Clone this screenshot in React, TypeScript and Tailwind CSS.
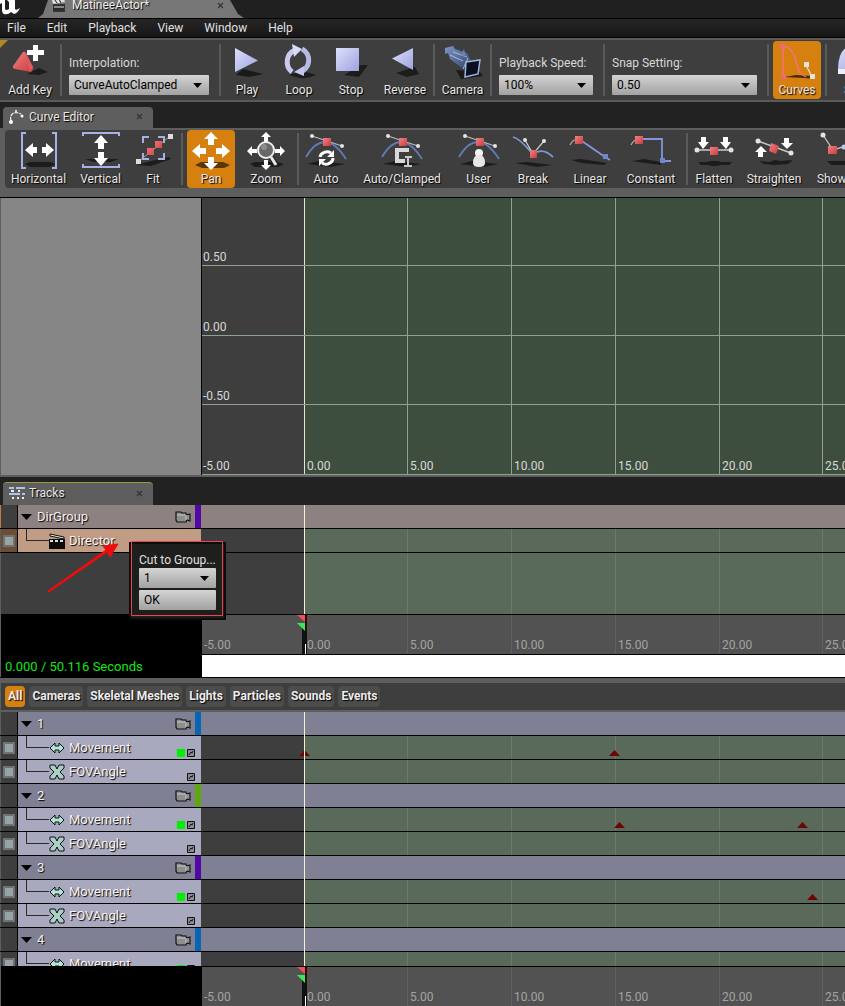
import * as React from "react";

const PX_PER_SECOND = 20.75;
const ZERO_X = 102;
const MARKS = [-5, 0, 5, 10, 15, 20, 25];

const timeToX = (t: number) => Math.floor(ZERO_X + t * PX_PER_SECOND);

/* ---------- toolbar icons ---------- */

function Icon({ children }: { children: React.ReactNode }) {
  return (
    <svg viewBox="0 0 42 40" className="h-10 w-[42px] shrink-0" fill="none" aria-hidden="true">
      <defs>
        <linearGradient id="lilac" x1="0" y1="0" x2="1" y2="1">
          <stop offset="0" stopColor="#dfe0fb" />
          <stop offset="1" stopColor="#9ba3e0" />
        </linearGradient>
        <linearGradient id="red" x1="0" y1="0" x2="1" y2="1">
          <stop offset="0" stopColor="#f58080" />
          <stop offset="1" stopColor="#c63c40" />
        </linearGradient>
        <linearGradient id="steel" x1="0" y1="0" x2="1" y2="1">
          <stop offset="0" stopColor="#7f97c4" />
          <stop offset="1" stopColor="#33486e" />
        </linearGradient>
      </defs>
      {children}
    </svg>
  );
}

const AddKeyIcon = () => (
  <Icon>
    <path d="M18 33l12-6 9 4-9 3z" fill="#1c1c1c" />
    <path d="M14 11q2-1 3 1l7 14q1 2-2 5l-16-3q-3-1-2-3z" fill="url(#red)" />
    <path d="M16 11l8 15-3 5z" fill="#e0585c" />
    <path d="M24 4h5v5h6v5h-6v6h-5v-6h-6V9h6z" fill="#fff" />
  </Icon>
);

const PlayIcon = () => (
  <Icon>
    <path d="M10 34l7-6 20 5-14 3z" fill="#1a1a1a" />
    <path d="M9 7l23 12.500L9 31z" fill="url(#lilac)" />
  </Icon>
);

const LoopIcon = () => (
  <Icon>
    <path d="M11 34q14-6 27 0-8 4-16 3z" fill="#1c1c1c" />
    <path d="M14 31A13 13 0 0 1 17 9" stroke="#c9cbee" strokeWidth="5" />
    <path d="M14 3l10 5-8 8z" fill="#d8daf7" />
    <path d="M24 8A12.500 12.500 0 0 1 22 31" stroke="#b7bbe4" strokeWidth="5" />
    <path d="M26 25v10l-10-4z" fill="#c3c6ee" />
  </Icon>
);

const StopIcon = () => (
  <Icon>
    <path d="M14 34l17-10h7l-9 12z" fill="#1c1c1c" />
    <path d="M6 7h23v23H6z" fill="url(#lilac)" />
  </Icon>
);

const ReverseIcon = () => (
  <Icon>
    <path d="M12 32l19-6 4 7-12 3z" fill="#1c1c1c" />
    <path d="M29 7v22L8 17.500z" fill="url(#lilac)" />
  </Icon>
);

const CameraIcon = () => (
  <Icon>
    <path d="M14 29l24 2 3 4-22 3z" fill="#1a1a1a" />
    <path d="M3 7l8-2 2 3 12 4 4 8-9 7L8 18 6 12l-3 1z" fill="url(#steel)" />
    <path d="M8 14l13 6m-10-9l14 5m-4 12l5-11" stroke="#a7bbe0" strokeWidth="1" />
    <path d="M19 14l3-6 2 8" fill="#6883b5" />
    <path d="M24 21l14-2-2 14-13 3z" fill="#0a1020" stroke="#9db4dd" strokeWidth="1.500" />
  </Icon>
);

const CurvesIcon = () => (
  <Icon>
    <path d="M8 36l12-2 16 1 2 3-10-1z" fill="#4a2a06" />
    <path d="M7 5v30M7 5c14 2 13 22 17 27l6 4" stroke="#f0747c" strokeWidth="1.500" />
    <path d="M30 24l6 12" stroke="#e8e0d0" strokeWidth="1.200" />
    <path d="M4 3h5v5H4zM5 33h5v5H5z" fill="#ee6a70" />
    <path d="M28 21h5v5h-5zM34 33h5v5h-5z" fill="#e6e4de" />
  </Icon>
);

const SlowIcon = () => (
  <Icon>
    <path d="M2 28Q2 4 20 4t20 24z" fill="url(#lilac)" />
    <path d="M2 28h38v5H2z" fill="#eef" />
  </Icon>
);

const HorizontalIcon = () => (
  <Icon>
    <path d="M7 34l5-2h20l6 2-6 3H12z" fill="#1c1c1c" />
    <path d="M8 3H4v35h4M34 3h4v35h-4" stroke="#a7b1e6" strokeWidth="2" />
    <path d="M7 20l8-7v4h4v6h-4v4zM36 20l-8-7v4h-4v6h4v4z" fill="#fff" />
  </Icon>
);

const VerticalIcon = () => (
  <Icon>
    <path d="M5 29h34l-8 3H14z" fill="#1c1c1c" />
    <path d="M3 6V3h36v3M3 34v3h36v-3" stroke="#a7b1e6" strokeWidth="2" />
    <path d="M21 5l7 8h-4v6h-6v-6h-4zM21 36l7-8h-4v-6h-6v6h-4z" fill="#fff" />
  </Icon>
);

const FitIcon = () => (
  <Icon>
    <path d="M5 35l10-3 22-5 2 2-20 7z" fill="#1c1c1c" />
    <path d="M17 7h-6v6M26 7h6v6M17 29h-6v-6M26 29h6v-6" stroke="#a7b1e6" strokeWidth="2" />
    <path d="M7 31l30-24" stroke="#aaa" strokeWidth="1" />
    <path d="M15 18h7v7h-7zM23 11h7v7h-7z" fill="url(#red)" />
    <path d="M4 29h5v5H4zM36 4h5v5h-5z" fill="#ddd" />
  </Icon>
);

const PanIcon = () => (
  <Icon>
    <path d="M5 35l6-3h22l7 3-6 3H12z" fill="#5a3505" />
    <path d="M21 2l7 7h-4v6h-6V9h-4zM21 40l7-7h-4v-6h-6v6h-4z" fill="#fff" />
    <path d="M2 21l8-7v4h6v6h-6v4zM40 21l-8-7v4h-6v6h6v4z" fill="#fff" />
  </Icon>
);

const ZoomIcon = () => (
  <Icon>
    <path d="M5 34l5-2h22l7 2-6 3H10z" fill="#1c1c1c" />
    <path
      d="M21 2l5 5h-3v5h-4V7h-3zM21 40l5-5h-3v-5h-4v5h-3zM2 21l5-5v3h5v4H7v3zM40 21l-5-5v3h-5v4h5v3z"
      fill="#fff"
    />
    <path d="M26 27l6 9" stroke="#222" strokeWidth="5" />
    <path d="M26 27l5 8" stroke="#e8e8e8" strokeWidth="3" />
    <circle cx="21" cy="20" r="8" fill="#686868" stroke="#eee" strokeWidth="2" />
    <circle cx="19" cy="17" r="3" fill="#8c8c8c" />
  </Icon>
);

function TangentCurve() {
  return (
    <>
      <path d="M2 34l12-3 26 3-14 3z" fill="#1c1c1c" />
      <path d="M1 27C8 15 14 12 20 12s14 6 21 17" stroke="#6079b4" strokeWidth="1.800" />
      <path d="M7 6l30 10" stroke="#bbb" strokeWidth="1.200" />
      <circle cx="7" cy="6" r="2" fill="#e4e4e4" />
      <circle cx="37" cy="16" r="2" fill="#e4e4e4" />
      <path d="M18 8h8v8h-8z" fill="url(#red)" />
    </>
  );
}

const AutoIcon = () => (
  <Icon>
    <TangentCurve />
    <path d="M15 27a7 6 0 0 1 11-4M28 28a7 6 0 0 1-11 5" stroke="#fff" strokeWidth="3" />
    <path d="M22 27h7v-7zM21 29h-7v7z" fill="#fff" />
  </Icon>
);

const ClampedIcon = () => (
  <Icon>
    <TangentCurve />
    <path d="M28 20H16v11h8" stroke="#d8d8d8" strokeWidth="4" />
    <path d="M24 27h7M27 27v10M23 36h8" stroke="#c8c8c8" strokeWidth="2" />
  </Icon>
);

const UserIcon = () => (
  <Icon>
    <TangentCurve />
    <circle cx="21" cy="23" r="4" fill="#f4f4f4" />
    <path d="M15 33q0-8 6-8t6 8q0 4-6 4t-6-4z" fill="#e6e6e6" />
  </Icon>
);

const BreakIcon = () => (
  <Icon>
    <path d="M3 33l12-1 25 3-15 2z" fill="#1c1c1c" />
    <path d="M1 7c8 2 15 12 20 17 7-5 14-3 20 3" stroke="#7d98d4" strokeWidth="1.800" />
    <path d="M13 10l8 14 11-13" stroke="#ccc" strokeWidth="1.200" />
    <circle cx="13" cy="10" r="2" fill="#e4e4e4" />
    <circle cx="32" cy="11" r="2" fill="#e4e4e4" />
    <path d="M18 20h7v8h-7z" fill="url(#red)" />
  </Icon>
);

const LinearIcon = () => (
  <Icon>
    <path d="M2 30l10-1 26 4-3 2-22-2z" fill="#1c1c1c" />
    <path d="M1 15q3-6 8-6" stroke="#aaa" strokeWidth="1.200" />
    <path d="M10 9l26 18 5 3" stroke="#8793dc" strokeWidth="1.800" />
    <path d="M6 6h8v8H6z" fill="url(#red)" />
    <path d="M34 24h5v5h-5z" fill="#6c86cf" />
  </Icon>
);

const ConstantIcon = () => (
  <Icon>
    <path d="M2 31l12-2 17 3v3l-16-2z" fill="#1c1c1c" />
    <path d="M1 15q3-6 8-6" stroke="#aaa" strokeWidth="1.200" />
    <path d="M10 9h22v22h9" stroke="#8793dc" strokeWidth="1.800" />
    <path d="M5 6h8v8H5z" fill="url(#red)" />
    <path d="M30 28h5v5h-5z" fill="#6c86cf" />
  </Icon>
);

const FlattenIcon = () => (
  <Icon>
    <path d="M5 32h9l3-1h8l3 1h11l-3 3h-8l-4 1h-6l-3-1H8z" fill="#1c1c1c" />
    <path d="M4 20h34" stroke="#ccc" strokeWidth="1.500" />
    <circle cx="4" cy="20" r="2.500" fill="#e4e4e4" />
    <circle cx="38" cy="20" r="2.500" fill="#e4e4e4" />
    <path d="M17 17h8v8h-8z" fill="url(#red)" />
    <path d="M8 7h5v5h3l-6 7-5-7h3zM30 7h5v5h3l-5 7-6-7h3z" fill="#fff" />
  </Icon>
);

const StraightenIcon = () => (
  <Icon>
    <path d="M6 31l10 1 6-2 6 1 12-1-5 4-14 1-10-1z" fill="#1c1c1c" />
    <path d="M5 11l33 12" stroke="#ccc" strokeWidth="1.500" />
    <circle cx="5" cy="11" r="2.500" fill="#e4e4e4" />
    <circle cx="38" cy="23" r="2.500" fill="#e4e4e4" />
    <path d="M18 13l8 3-3 8-7-3z" fill="url(#red)" />
    <path d="M31 8h5v5h4l-6 6-6-6h3zM5 27h5v-5h4l-6-6-6 6h3z" fill="#fff" />
  </Icon>
);

const ShowAllIcon = () => (
  <Icon>
    <path d="M8 31h28l-4 4H12z" fill="#1c1c1c" />
    <path d="M4 5l10 15 16-5" stroke="#ccc" strokeWidth="1.200" />
    <circle cx="4" cy="5" r="2.500" fill="#e4e4e4" />
    <circle cx="25" cy="17" r="2.500" fill="#bcc8ee" />
    <path d="M9 16h9v8H9z" fill="url(#red)" />
  </Icon>
);

/* ---------- shared controls ---------- */

type ToolButtonProps = { label: string; icon: React.ReactNode; width?: string; active?: boolean };

function ToolButton({ label, icon, width = "w-[52px]", active }: ToolButtonProps) {
  return (
    <button
      type="button"
      className={`flex h-full shrink-0 flex-col items-center gap-px overflow-hidden ${width} ${
        active ? "rounded-sm bg-[#d6800f]" : ""
      }`}
    >
      {icon}
      <span className="h-4 leading-4 whitespace-nowrap text-[#e6e6e6] [text-shadow:1px_1px_1px_#000]">{label}</span>
    </button>
  );
}

const Separator = () => <div className="my-[3px] w-[2px] shrink-0 bg-[#5a5a5a]" />;

function Dropdown({ id, value, width }: { id: string; value: string; width: string }) {
  return (
    <div className={`relative h-5 ${width}`}>
      <select
        id={id}
        defaultValue={value}
        className="h-5 w-full appearance-none rounded-[1px] bg-linear-to-b from-[#d4d4d4] to-[#a2a2a2] pl-[5px] leading-5 text-black"
      >
        <option>{value}</option>
      </select>
      <svg viewBox="0 0 9 5" className="pointer-events-none absolute top-2 right-[7px] h-[5px] w-[9px]">
        <path d="M0 0h9L4.500 5z" fill="#000" />
      </svg>
    </div>
  );
}

function LabeledDropdown({ id, label, value, width }: { id: string; label: string; value: string; width: string }) {
  return (
    <div className="flex shrink-0 flex-col gap-1 pt-[14px] pr-[10px] pl-[7px]">
      <label htmlFor={id} className="h-4 leading-4 whitespace-nowrap text-[#d8d8d8]">
        {label}
      </label>
      <Dropdown id={id} value={value} width={width} />
    </div>
  );
}

function PanelTab({ title, icon, className }: { title: string; icon: React.ReactNode; className: string }) {
  return (
    <div className={`ml-[3px] flex w-[150px] items-center rounded-t-sm bg-[#5e5e5e] pr-[10px] pb-[2px] pl-[6px] ${className}`}>
      {icon}
      <span className="ml-1 flex-1 text-[#e6e6e6] [text-shadow:1px_1px_1px_#000]">{title}</span>
      <CloseButton />
    </div>
  );
}

function CloseButton() {
  return (
    <button type="button" aria-label="Close" className="shrink-0">
      <svg viewBox="0 0 7 7" className="h-[7px] w-[7px]">
        <path d="M1 1l5 5M6 1L1 6" stroke="#333" strokeWidth="1.200" />
      </svg>
    </button>
  );
}

/* ---------- top of the window ---------- */

function TitleBar() {
  return (
    <header className="flex h-[18px] shrink-0 overflow-hidden bg-[#202020]">
      <svg viewBox="0 0 38 18" className="h-[18px] w-[38px] shrink-0" aria-label="Unreal Editor">
        <path d="M0 0h5v9q1 2 4 0V2L7 0h8v9q1 2 5-1-2 5-6 6l-3-2q-3 3-7 2-2-1-2-4V3L0 4z" fill="#fff" />
      </svg>
      <div className="flex h-[18px] w-[206px] items-center bg-[#777] pr-[20px] pb-2 pl-[14px] [clip-path:polygon(10px_0,192px_0,200px_14px,206px_100%,0_100%,5px_14px)]">
        <svg viewBox="0 0 14 13" className="h-[13px] w-[14px] shrink-0">
          <path d="M1 5h12v8H1z" fill="#333" />
          <path d="M0 1l12-1 1 3-12 2z" fill="#ddd" />
          <path d="M3 1l2 3M7 0l2 4M3 6l-2 2m6-2L5 8m6-2L9 8M1 10h11" stroke="#222" />
          <path d="M2 8h10" stroke="#ddd" />
        </svg>
        <span className="ml-[6px] flex-1 text-[#eee] [text-shadow:1px_1px_1px_#000]">MatineeActor*</span>
        <CloseButton />
      </div>
    </header>
  );
}

function MenuBar() {
  return (
    <nav className="flex h-5 shrink-0 items-center gap-[21px] border-y border-black bg-linear-to-b from-[#262626] to-[#161616] pl-[7px] text-[#e0e0e0]">
      {["File", "Edit", "Playback", "View", "Window", "Help"].map((item) => (
        <button key={item} type="button">
          {item}
        </button>
      ))}
    </nav>
  );
}

function MainToolbar() {
  return (
    <div className="relative flex h-16 shrink-0 overflow-hidden border-y-2 border-[#5a5a5a] bg-[#3e3e3e] py-px">
      <div className="absolute top-0 left-0 h-2 w-2 bg-[#b08a1c] [clip-path:polygon(0_0,100%_0,0_100%)]" />
      <div className="flex w-[60px] shrink-0 justify-center">
        <ToolButton label="Add Key" icon={<AddKeyIcon />} />
      </div>
      <Separator />
      <LabeledDropdown id="interpolation" label="Interpolation:" value="CurveAutoClamped" width="w-[140px]" />
      <Separator />
      <ToolButton label="Play" icon={<PlayIcon />} />
      <ToolButton label="Loop" icon={<LoopIcon />} />
      <ToolButton label="Stop" icon={<StopIcon />} />
      <ToolButton label="Reverse" icon={<ReverseIcon />} width="w-[56px]" />
      <Separator />
      <ToolButton label="Camera" icon={<CameraIcon />} width="w-[55px]" />
      <Separator />
      <LabeledDropdown id="speed" label="Playback Speed:" value="100%" width="w-[94px]" />
      <Separator />
      <LabeledDropdown id="snap" label="Snap Setting:" value="0.50" width="w-[145px]" />
      <Separator />
      <div className="flex shrink-0 px-1">
        <ToolButton label="Curves" icon={<CurvesIcon />} width="w-12" active />
      </div>
      <Separator />
      <div className="flex shrink-0 px-1">
        <ToolButton label="Slow" icon={<SlowIcon />} />
      </div>
    </div>
  );
}

/* ---------- curve editor ---------- */

function CurveToolbar() {
  return (
    <div className="shrink-0 bg-[#5e5e5e] pt-[2px] pb-[9px] pl-[5px]">
      <div className="flex h-[58px] overflow-hidden rounded-l-sm bg-[#3e3e3e]">
        <ToolButton label="Horizontal" icon={<HorizontalIcon />} width="w-[67px]" />
        <ToolButton label="Vertical" icon={<VerticalIcon />} width="w-[57px]" />
        <div className="flex shrink-0 pr-1">
          <ToolButton label="Fit" icon={<FitIcon />} width="w-12" />
        </div>
        <Separator />
        <div className="flex shrink-0 pl-1">
          <ToolButton label="Pan" icon={<PanIcon />} width="w-12" active />
        </div>
        <ToolButton label="Zoom" icon={<ZoomIcon />} width="w-[62px]" />
        <Separator />
        <ToolButton label="Auto" icon={<AutoIcon />} width="w-[54px]" />
        <ToolButton label="Auto/Clamped" icon={<ClampedIcon />} width="w-[98px]" />
        <ToolButton label="User" icon={<UserIcon />} width="w-[55px]" />
        <ToolButton label="Break" icon={<BreakIcon />} width="w-[54px]" />
        <ToolButton label="Linear" icon={<LinearIcon />} width="w-[60px]" />
        <div className="flex shrink-0 pr-1">
          <ToolButton label="Constant" icon={<ConstantIcon />} width="w-[62px]" />
        </div>
        <Separator />
        <ToolButton label="Flatten" icon={<FlattenIcon />} />
        <ToolButton label="Straighten" icon={<StraightenIcon />} width="w-[68px]" />
        <ToolButton label="Show All" icon={<ShowAllIcon />} width="w-[64px]" />
      </div>
    </div>
  );
}

function CurveGraph() {
  return (
    <div className="flex h-[278px] shrink-0 border-t border-black">
      <div className="w-[201px] shrink-0 border-l border-[#5e5e5e] bg-[#868686]" />
      <div className="relative flex-1 overflow-hidden border-l border-black bg-[#3e3e3e]">
        <div className="absolute inset-y-0 right-0 bg-[#3e4e3e]" style={{ left: timeToX(0) }} />
        {MARKS.slice(1).map((t) => (
          <div
            key={t}
            className={`absolute inset-y-0 w-px ${t === 0 ? "bg-[#e8e4cc]" : "bg-[#8fa28f]"}`}
            style={{ left: timeToX(t) }}
          />
        ))}
        <div className="relative grid h-full grid-rows-[68px_70px_69px_1fr]">
          {["0.50", "0.00", "-0.50", "-5.00"].map((value) => (
            <div key={value} className="flex items-end border-b border-[#8fa28f] pl-px leading-4 text-[#d8d8d8]">
              {value}
            </div>
          ))}
        </div>
        {MARKS.slice(1).map((t) => (
          <span
            key={t}
            className="absolute bottom-px pl-[3px] leading-4 text-[#d8d8d8]"
            style={{ left: timeToX(t) }}
          >
            {t.toFixed(2)}
          </span>
        ))}
      </div>
    </div>
  );
}

/* ---------- tracks ---------- */

type Track = { name: "Movement" | "FOVAngle" | "Director"; keys?: number[] };
type Group = { name: string; bar: string; tracks: Track[] };

const GROUPS: Group[] = [
  {
    name: "1",
    bar: "bg-[#0766b4]",
    tracks: [{ name: "Movement", keys: [0, 14.95] }, { name: "FOVAngle" }],
  },
  {
    name: "2",
    bar: "bg-[#5fa80c]",
    tracks: [{ name: "Movement", keys: [15.2, 24] }, { name: "FOVAngle" }],
  },
  {
    name: "3",
    bar: "bg-[#5407a8]",
    tracks: [{ name: "Movement", keys: [24.5] }, { name: "FOVAngle" }],
  },
  {
    name: "4",
    bar: "bg-[#0766b4]",
    tracks: [{ name: "Movement" }, { name: "FOVAngle" }],
  },
];

function CameraBadge() {
  return (
    <svg viewBox="0 0 16 12" className="h-3 w-4 shrink-0" aria-hidden="true">
      <path d="M1 1h5l1 1h4v2l4-1v7l-3-1-1 2H2L1 9z" fill="#8e8e8e" stroke="#111" strokeWidth="1.200" />
      <path d="M2 4h9v5" fill="none" stroke="#c4c4c4" />
    </svg>
  );
}

function GroupRow({ name, bar, director }: { name: string; bar: string; director?: boolean }) {
  const tone = director ? "bg-[#8e8181]" : "bg-[#808094]";
  return (
    <div className="flex h-6 shrink-0 border-b border-black">
      <div
        className={`w-[18px] shrink-0 border-r border-l border-r-black bg-[#3e3e3e] ${
          director ? "border-l-[#c07a44]" : "border-l-[#5e5e5e]"
        }`}
      />
      <div className={`flex w-[183px] shrink-0 items-center pl-[3px] ${tone}`}>
        <svg viewBox="0 0 11 6" className="h-[6px] w-[11px] shrink-0">
          <path d="M0 0h11L5.500 6z" fill="#000" />
        </svg>
        <span className="ml-[5px] flex-1 text-[13px] text-[#f0f0f0] [text-shadow:1px_1px_1px_#000]">{name}</span>
        <CameraBadge />
        <div className={`ml-1 h-full w-[6px] ${bar}`} />
      </div>
      <div className={`flex-1 ${tone}`} />
    </div>
  );
}

function TrackIcon({ name }: { name: Track["name"] }) {
  if (name === "Director") {
    return (
      <svg viewBox="0 0 16 16" className="h-4 w-4 shrink-0">
        <path d="M0 6h16v10H0z" fill="#0c0c0c" />
        <path d="M1 1l14 3v2L1 3z" fill="#eee" stroke="#0c0c0c" />
        <path d="M1 8h14" stroke="#cfe5df" strokeWidth="2" strokeDasharray="3 2" />
      </svg>
    );
  }
  if (name === "Movement") {
    return (
      <svg viewBox="0 0 16 16" className="h-4 w-4 shrink-0">
        <path d="M1 8l5-5v3h4V3l5 5-5 5v-3H6v3z" fill="#b4e6d8" stroke="#111" />
      </svg>
    );
  }
  return (
    <svg viewBox="0 0 16 16" className="h-4 w-4 shrink-0">
      <path d="M1 1h5l2 4 2-4h5v3l-4 4 4 4v3h-5l-2-4-2 4H1v-3l4-4-4-4z" fill="#a9cfc6" stroke="#111" />
    </svg>
  );
}

function TrackRow({ group, track }: { group: string; track: Track }) {
  const director = track.name === "Director";
  return (
    <div className="flex h-6 shrink-0 border-b border-black">
      <div
        className={`flex w-[18px] shrink-0 items-center border-r border-l border-r-black border-l-[#5e5e5e] pl-[2px] ${
          director ? "bg-[#6d4c36]" : "bg-[#3e3e3e]"
        }`}
      >
        <input
          type="checkbox"
          defaultChecked
          aria-label={`${group} ${track.name}`}
          className="h-3 w-3 appearance-none border-2 border-[#6f7272] bg-[#98a3a5]"
        />
      </div>
      <div className={`flex w-[183px] shrink-0 items-center pr-[6px] pl-2 ${director ? "bg-[#c09c84]" : "bg-[#a8a8be]"}`}>
        <div className="mb-[11px] h-[12px] w-[23px] shrink-0 border-b border-l border-[#2a2a30]" />
        <TrackIcon name={track.name} />
        <span className="ml-1 flex-1 text-[13px] text-[#f4f4f4] [text-shadow:1px_1px_1px_#000]">{track.name}</span>
        {!director && (
          <div className="flex gap-[2px] self-end pb-[2px]">
            {track.name === "Movement" && <div className="h-2 w-2 bg-[#00f000]" />}
            <svg viewBox="0 0 8 8" className="h-2 w-2">
              <path d="M.5.5h7v7h-7z" fill="#8a8a92" stroke="#111" />
              <path d="M2 6l2-3 1 1 1-2" fill="none" stroke="#111" />
            </svg>
          </div>
        )}
      </div>
      <Lane keys={track.keys} />
    </div>
  );
}

function Lane({ keys = [] }: { keys?: number[] }) {
  return (
    <div className="relative flex-1 overflow-hidden border-l border-[#3e3e3e] bg-[#3e3e3e]">
      <div className="absolute inset-y-0 right-0 bg-[#596a5a]" style={{ left: timeToX(0) }} />
      {MARKS.slice(2).map((t) => (
        <div key={t} className="absolute inset-y-0 w-px bg-[#6b7b6b]" style={{ left: timeToX(t) }} />
      ))}
      {keys.map((t) => (
        <svg
          key={t}
          viewBox="0 0 11 6"
          className="absolute bottom-[3px] h-[6px] w-[11px] -translate-x-[5px]"
          style={{ left: timeToX(t) }}
        >
          <path d="M0 6L5.500 0 11 6z" fill="#6a0606" />
        </svg>
      ))}
    </div>
  );
}

/* The playhead runs over every lane of its section. */
function Playhead() {
  return (
    <div className="pointer-events-none absolute inset-y-0 right-0 left-[202px]">
      <div className="absolute inset-y-0 w-px bg-[#f4efd4]" style={{ left: timeToX(0) }} />
    </div>
  );
}

function Ruler() {
  return (
    <div className="relative h-10 overflow-hidden border-t border-black bg-[#525252]">
      {MARKS.slice(2).map((t) => (
        <div key={t} className="absolute inset-y-0 w-px bg-[#616161]" style={{ left: timeToX(t) }} />
      ))}
      <div className="absolute top-0 flex h-full w-[11px] -translate-x-2" style={{ left: timeToX(0) }}>
        <svg viewBox="0 0 11 39" className="h-full w-full">
          <path d="M6 8h5v31H6z" fill="#111" />
          <path d="M9 0h2v17H9z" fill="#300a0a" />
          <path d="M1 0h8v7z" fill="#f0505c" />
          <path d="M1 8h8v8z" fill="#3ce65a" />
          <path d="M9 29h1v10H9z" fill="#fff" />
        </svg>
      </div>
      {MARKS.map((t) => (
        <span
          key={t}
          className="absolute bottom-px pl-[3px] leading-4 text-[#a4a4a4]"
          style={{ left: Math.max(timeToX(t), -1) }}
        >
          {t.toFixed(2)}
        </span>
      ))}
    </div>
  );
}

function CutPopup() {
  return (
    <div className="absolute top-[37px] left-[129px] w-[97px] border-2 border-[#0c0c0c] bg-[#1e1e1c] px-2 pt-2 pb-2">
      <label htmlFor="cut-group" className="block h-4 leading-4 whitespace-nowrap text-[#e0e0e0]">
        Cut to Group...
      </label>
      <Dropdown id="cut-group" value="1" width="w-[77px]" />
      <button
        type="button"
        className="mt-[2px] block h-5 w-[77px] rounded-[1px] bg-linear-to-b from-[#d4d4d4] to-[#a2a2a2] pl-[5px] text-left leading-5 text-black"
      >
        OK
      </button>
      <svg viewBox="0 0 92 75" className="pointer-events-none absolute -top-[3px] left-0 h-[75px] w-[92px]" fill="none">
        <path d="M.5.5h91v74H.5z" stroke="#ee4450" />
      </svg>
    </div>
  );
}

function DirectorTracks() {
  return (
    <section className="relative shrink-0">
      <div className="relative">
        <GroupRow name="DirGroup" bar="bg-[#5407a8]" director />
        <TrackRow group="DirGroup" track={{ name: "Director" }} />
        <div className="flex h-[61px]">
          <div className="w-[201px] shrink-0 border-l border-[#5e5e5e] bg-[#3e3e3e]" />
          <Lane />
        </div>
        <Playhead />
      </div>
      <div className="flex h-16 border-b border-black">
        <div className="flex w-[202px] shrink-0 items-end border-l border-[#5e5e5e] bg-black pb-[2px] pl-1 text-[13px] whitespace-nowrap text-[#14e614]">
          0.000 / 50.116 Seconds
        </div>
        <div className="flex flex-1 flex-col overflow-hidden">
          <Ruler />
          <div className="flex-1 border-t border-black bg-white" />
        </div>
      </div>
      <CutPopup />
      <svg viewBox="0 0 72 50" className="pointer-events-none absolute top-[38px] left-[47px] h-[50px] w-[72px]">
        <path d="M1 48L59 7l-3-4 15-2-8 13-3-5L2 49z" fill="#f00c0c" stroke="#f00c0c" />
      </svg>
    </section>
  );
}

function FilterBar() {
  return (
    <div className="shrink-0 bg-[#5e5e5e] pt-[5px] pb-[2px] pl-px">
      <div className="flex h-[27px] items-center gap-1 bg-[#3e3e3e] pb-px pl-1 font-bold text-[#ececec]">
        {["All", "Cameras", "Skeletal Meshes", "Lights", "Particles", "Sounds", "Events"].map((name) => (
          <button
            key={name}
            type="button"
            className={`h-[21px] rounded-sm px-[3px] whitespace-nowrap [text-shadow:1px_1px_1px_#000] ${
              name === "All" ? "bg-[#d6800f]" : "bg-[#4c4c4c]"
            }`}
          >
            {name}
          </button>
        ))}
      </div>
    </div>
  );
}

export default function App() {
  return (
    <div className="flex h-screen flex-col overflow-hidden bg-[#222] font-[Roboto,sans-serif] text-[12px] leading-4">
      <TitleBar />
      <MenuBar />
      <MainToolbar />

      <div className="flex h-[26px] shrink-0 pt-[5px]">
        <PanelTab
          title="Curve Editor"
          className=""
          icon={
            <svg viewBox="0 0 16 16" className="h-4 w-4 shrink-0" fill="none">
              <path d="M2 12C0 4 6 2 12 5" stroke="#eee" strokeWidth="1.200" strokeDasharray="4 1" />
              <circle cx="2" cy="13" r="2" fill="#fff" />
              <circle cx="13" cy="7" r="1.500" fill="#fff" />
              <circle cx="7" cy="2" r="1" fill="#fff" />
            </svg>
          }
        />
      </div>
      <CurveToolbar />
      <CurveGraph />

      <div className="flex h-[30px] shrink-0 border-t-2 border-[#5e5e5e] pt-[5px]">
        <PanelTab
          title="Tracks"
          className="border-t border-[#9a9a38]"
          icon={
            <svg viewBox="0 0 16 14" className="h-[14px] w-4 shrink-0" fill="none">
              <path d="M0 2h16M0 8h16" stroke="#b4c4e4" strokeWidth="2" />
              <path d="M2 5h3M9 5h2M3 12h2M8 12h2M13 12h2" stroke="#eee" strokeWidth="2" />
              <path d="M5 2h2M11 8h2" stroke="#5e5e5e" strokeWidth="2" />
            </svg>
          }
        />
      </div>
      <DirectorTracks />
      <FilterBar />

      <section className="relative flex min-h-0 flex-1 flex-col overflow-hidden">
        {GROUPS.map((group) => (
          <React.Fragment key={group.name}>
            <GroupRow name={group.name} bar={group.bar} />
            {group.tracks.map((track) => (
              <TrackRow key={track.name} group={group.name} track={track} />
            ))}
          </React.Fragment>
        ))}
        <Playhead />
      </section>
      <div className="flex shrink-0">
        <div className="w-[202px] shrink-0 border-l border-[#5e5e5e] bg-black" />
        <div className="flex-1 overflow-hidden">
          <Ruler />
        </div>
      </div>
    </div>
  );
}
